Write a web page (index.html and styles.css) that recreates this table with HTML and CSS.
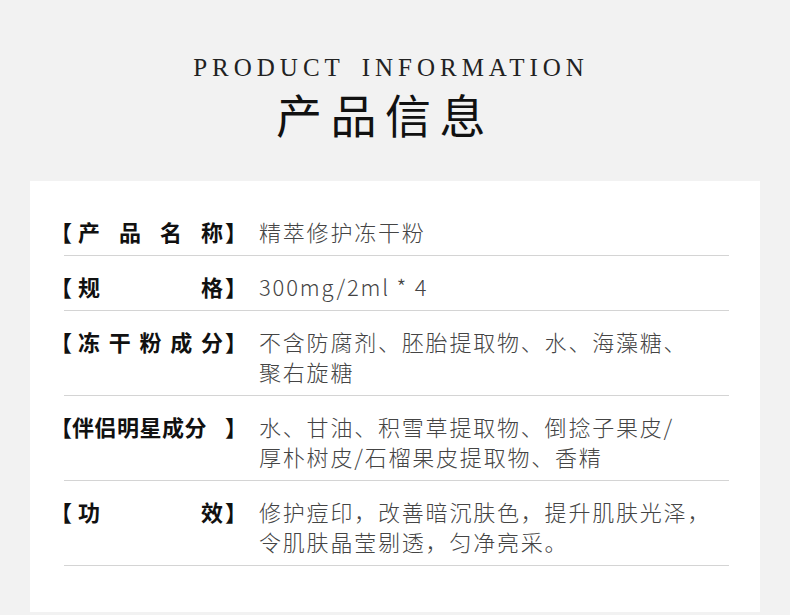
FILE: index.html
```html
<!DOCTYPE html>
<html lang="zh-CN">
<head>
    <meta charset="UTF-8">
    <meta name="viewport" content="width=device-width, initial-scale=1.0">
    <title>产品信息</title>
    <link rel="stylesheet" href="styles.css">
</head>
<body>
    <div class="header">
        <div class="title-en">PRODUCT INFORMATION</div>
        <h1 class="title-cn">产品信息</h1>
    </div>

    <div class="card">
        <div class="row">
            <div class="label">
                <span>【</span>
                <span class="label-text"><i>产</i><i>品</i><i>名</i><i>称</i></span>
                <span>】</span>
            </div>
            <div class="value">精萃修护冻干粉</div>
        </div>
        <div class="row">
            <div class="label">
                <span>【</span>
                <span class="label-text"><i>规</i><i>格</i></span>
                <span>】</span>
            </div>
            <div class="value">300mg/2ml * 4</div>
        </div>
        <div class="row">
            <div class="label">
                <span>【</span>
                <span class="label-text"><i>冻</i><i>干</i><i>粉</i><i>成</i><i>分</i></span>
                <span>】</span>
            </div>
            <div class="value">不含防腐剂、胚胎提取物、水、海藻糖、<br>聚右旋糖</div>
        </div>
        <div class="row">
            <div class="label">
                <span>【</span>
                <span class="label-text tight"><i>伴</i><i>侣</i><i>明</i><i>星</i><i>成</i><i>分</i></span>
                <span>】</span>
            </div>
            <div class="value">水、甘油、积雪草提取物、倒捻子果皮/<br>厚朴树皮/石榴果皮提取物、香精</div>
        </div>
        <div class="row">
            <div class="label">
                <span>【</span>
                <span class="label-text"><i>功</i><i>效</i></span>
                <span>】</span>
            </div>
            <div class="value">修护痘印，改善暗沉肤色，提升肌肤光泽，<br>令肌肤晶莹剔透，匀净亮采。</div>
        </div>
    </div>
</body>
</html>
```

FILE: styles.css
```css
body {
    margin: 0;
    background-color: #f2f2f2;
    font-family: "Noto Sans CJK SC", "Noto Sans", sans-serif;
    color: #333;
}
.header {
    padding-top: 53px;
    text-align: center;
}
.title-en {
    padding-right: 8px;
    font-family: "Liberation Serif", serif;
    font-size: 25px;
    line-height: 30px;
    letter-spacing: 5px;
    word-spacing: 6px;
    color: #222;
}
.title-cn {
    margin: 4px 0 0;
    padding-right: 20px;
    font-size: 46px;
    line-height: 52px;
    font-weight: 400;
    letter-spacing: 8.5px;
    color: #111;
}
.card {
    margin: 42px 30px 0;
    padding: 20px 31px 46px 34px;
    background-color: #ffffff;
}
.row {
    display: flex;
    align-items: flex-start;
    padding: 15px 0 9px;
    border-bottom: 1px solid #d4d4d4;
}
.label {
    display: flex;
    width: 197px;
    margin-left: -14px;
    margin-right: 12px;
    flex-shrink: 0;
    font-size: 22px;
    line-height: 30px;
    font-weight: 700;
    color: #111;
}
.label-text {
    flex: 1;
    display: flex;
    justify-content: space-between;
    padding: 0 2px 0 6px;
}
.label-text.tight {
    justify-content: flex-start;
    padding: 0;
    letter-spacing: 0.5px;
}
.label-text i {
    font-style: normal;
}
.value {
    font-size: 22px;
    line-height: 30px;
    font-weight: 300;
    letter-spacing: 1.8px;
    color: #444;
}
```
